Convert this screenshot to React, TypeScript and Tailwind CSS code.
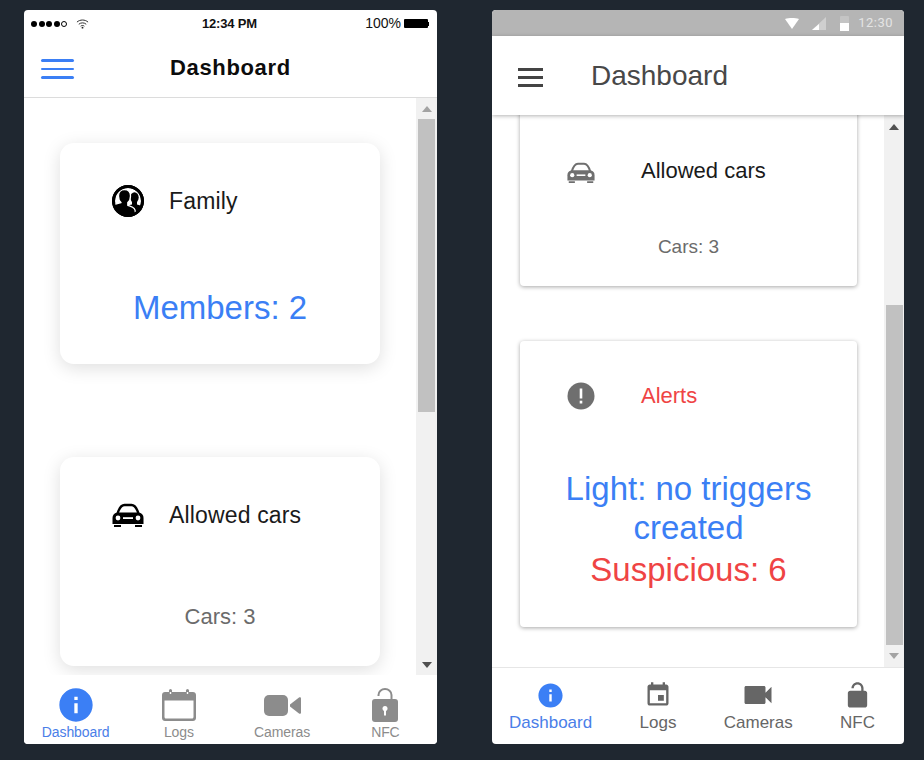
const FONT = "font-['Liberation_Sans',Arial,sans-serif]";

function ScrollArrow({ up, dark }: { up?: boolean; dark?: boolean }) {
  return (
    <svg viewBox="0 0 10 6" className="w-[10px] h-[6px]" aria-hidden="true">
      <path d={up ? "M5 0l5 6H0z" : "M0 0h10L5 6z"} fill={dark ? "#505050" : "#a3a3a3"} />
    </svg>
  );
}

function FamilyIcon() {
  return (
    <svg viewBox="0 0 32 32" className="w-8 h-8" aria-hidden="true">
      <defs>
        <clipPath id="family-clip">
          <circle cx="16" cy="16" r="14" />
        </clipPath>
      </defs>
      <circle cx="16" cy="16" r="14.500" fill="#fff" stroke="#000" strokeWidth="3" />
      <g clipPath="url(#family-clip)">
        <ellipse cx="22.500" cy="12.500" rx="4.200" ry="5.200" fill="#000" />
        <path d="M20 16h5v3.500c2.500.8 5 1.500 7 3v9.500H14V21c2-.6 4.500-1 6-1.500z" fill="#000" />
        <path d="M12.500 4.500c3.800 0 6 2.700 6 6.500 0 2.800-1 5.200-2.700 6.500v2.800c2.500 1 5.300 1.700 6.500 3.400.7 1 1 2.300 1 3.300L24 32H0V20c2.500-.6 6.500-1.500 9-2.400V17.500C7.400 16.200 6.500 13.800 6.500 11c0-3.800 2.200-6.500 6-6.500z" fill="#000" stroke="#fff" strokeWidth="1.300" />
      </g>
      <circle cx="16" cy="16" r="14.500" fill="none" stroke="#000" strokeWidth="3" />
    </svg>
  );
}

function CarIcon({ color, className }: { color: string; className: string }) {
  return (
    <svg viewBox="0 0 32 24" className={className} aria-hidden="true">
      <path d="M5.500 11C7 5.500 9 2 12.500 2h7c3.500 0 5.500 3.500 7 9" fill="none" stroke={color} strokeWidth="2.400" />
      <path d="M5 9.500h22c3 1 4.500 2.500 4.500 5.500v6H.5v-6c0-3 1.500-4.500 4.500-5.500z" fill={color} />
      <circle cx="6" cy="15" r="2.400" fill="#fff" />
      <circle cx="26" cy="15" r="2.400" fill="#fff" />
      <rect x="11" y="14.200" width="10" height="1.800" fill="#fff" />
      <rect x="2" y="22" width="7" height="2" fill={color} />
      <rect x="23" y="22" width="7" height="2" fill={color} />
    </svg>
  );
}

function IosCalendar() {
  return (
    <svg viewBox="0 0 34 32" className="w-[34px] h-8" aria-hidden="true">
      <path fillRule="evenodd" fill="#8c8c8c" d="M3 3h28c1.600 0 3 1.300 3 3v23c0 1.700-1.400 3-3 3H3c-1.600 0-3-1.300-3-3V6c0-1.700 1.400-3 3-3zm-.5 8.500V28c0 .9.600 1.500 1.500 1.500h26c.9 0 1.500-.6 1.500-1.500V11.500z" />
      <rect x="7" y="0" width="3" height="5" rx="1.500" fill="#8c8c8c" />
      <rect x="24" y="0" width="3" height="5" rx="1.500" fill="#8c8c8c" />
      <rect x="7.800" y="3" width="1.400" height="2" fill="#fff" />
      <rect x="24.800" y="3" width="1.400" height="2" fill="#fff" />
    </svg>
  );
}

function IosVideo() {
  return (
    <svg viewBox="0 0 37 21" className="w-[37px] h-[21px]" aria-hidden="true">
      <rect x="0" y="0" width="24" height="21" rx="5" fill="#8c8c8c" />
      <path d="M26 9.500 35 2.500c1-.7 2-.2 2 1v14c0 1.200-1 1.700-2 1l-9-7z" fill="#8c8c8c" />
    </svg>
  );
}

function IosLock() {
  return (
    <svg viewBox="0 0 26 34" className="w-[26px] h-[34px]" aria-hidden="true">
      <path d="M6.500 8V7C6.500 3.500 9.500 1 13 1s6.500 2.500 6.500 6v6" fill="none" stroke="#8c8c8c" strokeWidth="2" />
      <rect x="0" y="11" width="26" height="23" rx="3" fill="#8c8c8c" />
      <circle cx="13" cy="20.500" r="2.500" fill="#fff" />
      <rect x="12" y="20.500" width="2" height="7" fill="#fff" />
    </svg>
  );
}

function MdIcon({ d, size, color }: { d: string; size: string; color: string }) {
  return (
    <svg viewBox="0 0 24 24" className={size} aria-hidden="true">
      <path d={d} fill={color} />
    </svg>
  );
}

const INFO = "M12 2C6.480 2 2 6.480 2 12s4.480 10 10 10 10-4.480 10-10S17.520 2 12 2zm1 15h-2v-6h2v6zm0-8h-2V7h2v2z";
const EVENT = "M17 12h-5v5h5v-5zM16 1v2H8V1H6v2H5c-1.110 0-1.990.9-1.990 2L3 19c0 1.100.89 2 2 2h14c1.100 0 2-.9 2-2V5c0-1.100-.9-2-2-2h-1V1h-2zm3 18H5V8h14v11z";
const VIDEO = "M17 10.500V7c0-.55-.45-1-1-1H4c-.55 0-1 .45-1 1v10c0 .55.45 1 1 1h12c.55 0 1-.45 1-1v-3.500l4 4v-11l-4 4z";
const LOCK = "M12 17c1.100 0 2-.9 2-2s-.9-2-2-2-2 .9-2 2 .9 2 2 2zm6-9h-1V6c0-2.760-2.240-5-5-5S7 3.240 7 6h1.900c0-1.710 1.390-3.100 3.100-3.100 1.710 0 3.100 1.390 3.100 3.100v2H6c-1.100 0-2 .9-2 2v10c0 1.100.9 2 2 2h12c1.100 0 2-.9 2-2V10c0-1.100-.9-2-2-2z";

function IosStatusBar() {
  return (
    <div className="h-[30px] flex items-center pl-[7px] pr-[8px] pb-[3px] text-[14px] text-[#111]">
      <div className="w-[171px] flex items-center gap-[9px]">
        <div className="flex items-center gap-[1.5px]">
          <span className="w-[6px] h-[6px] rounded-full bg-black" />
          <span className="w-[6px] h-[6px] rounded-full bg-black" />
          <span className="w-[6px] h-[6px] rounded-full bg-black" />
          <span className="w-[6px] h-[6px] rounded-full bg-black" />
          <span className="w-[6px] h-[6px] rounded-full border border-black" />
        </div>
        <svg viewBox="0 0 14 11" className="w-[13px] h-[11px]" aria-hidden="true">
          <path d="M1 4c3.400-3 8.600-3 12 0M3 6.300c2.300-2 5.700-2 8 0M5 8.400c1.200-1 2.800-1 4 0" fill="none" stroke="#222" strokeWidth="1" />
          <circle cx="7" cy="10" r="1" fill="#222" />
        </svg>
      </div>
      <span className="text-[13px] font-bold tracking-[-0.2px]">12:34 PM</span>
      <div className="flex-1 flex items-center justify-end gap-[3px]">
        <span className="text-[14px]">100%</span>
        <span className="w-[24px] h-[9px] bg-black rounded-[1px]" />
        <span className="w-[1px] h-[4px] bg-black -ml-[3px]" />
      </div>
    </div>
  );
}

function IosPhone() {
  return (
    <div className="w-[413px] h-[734px] bg-white rounded-[4px] overflow-hidden flex flex-col shrink-0">
      <IosStatusBar />
      <div className="h-[57px] flex items-center pl-[17px] border-b border-[#dcdcdc] box-content">
        <div className="w-[33px] flex flex-col gap-[6px]">
          <span className="h-[3px] rounded-full bg-[#3b7ff5]" />
          <span className="h-[2px] rounded-full bg-[#3b7ff5]" />
          <span className="h-[3px] rounded-full bg-[#3b7ff5]" />
        </div>
        <h1 className="ml-[96px] -mt-[2px] text-[22px] font-bold tracking-[0.65px] text-[#0c0c0c]">Dashboard</h1>
      </div>
      <div className="flex-1 min-h-0 flex">
        <div className="w-[392px] overflow-hidden pl-[36px] pt-[45px]">
          <div className="w-[320px] h-[221px] bg-white rounded-[14px] shadow-[0_4px_18px_rgba(0,0,0,0.13)] pt-[42px]">
            <div className="flex items-center pl-[52px] gap-[25px] h-8">
              <FamilyIcon />
              <span className="text-[23px] tracking-[0.15px] text-[#1a1a1a] leading-8">Family</span>
            </div>
            <div className="mt-[71px] text-center text-[33px] leading-10 text-[#3b7ff5]">Members: 2</div>
          </div>
          <div className="mt-[93px] w-[320px] h-[209px] bg-white rounded-[14px] shadow-[0_4px_18px_rgba(0,0,0,0.13)] pt-[42px]">
            <div className="flex items-center pl-[52px] gap-[25px] h-8">
              <CarIcon color="#000" className="w-8 h-6" />
              <span className="text-[23px] tracking-[0.15px] text-[#1a1a1a] leading-8">Allowed cars</span>
            </div>
            <div className="mt-[72px] text-center text-[22px] leading-7 text-[#6b6b6b]">Cars: 3</div>
          </div>
        </div>
        <div className="w-[21px] bg-[#f1f1f1] flex flex-col items-center">
          <div className="h-[21px] flex items-center justify-center"><ScrollArrow up /></div>
          <div className="w-[17px] h-[293px] bg-[#c1c1c1]" />
          <div className="mt-auto h-[21px] flex items-center justify-center"><ScrollArrow dark /></div>
        </div>
      </div>
      <div className="h-[69px] grid grid-cols-4 pt-[13px] text-[14px] tracking-[-0.1px] leading-4 text-[#8c8c8c] bg-white">
        <div className="flex flex-col items-center gap-[2px] text-[#4a7ee8]">
          <div className="h-[34px] flex items-center"><MdIcon d={INFO} size="w-10 h-10" color="#3b7ff5" /></div>
          <span>Dashboard</span>
        </div>
        <div className="flex flex-col items-center gap-[2px]">
          <div className="h-[34px] flex items-center"><IosCalendar /></div>
          <span>Logs</span>
        </div>
        <div className="flex flex-col items-center gap-[2px]">
          <div className="h-[34px] flex items-center"><IosVideo /></div>
          <span>Cameras</span>
        </div>
        <div className="flex flex-col items-center gap-[2px]">
          <div className="h-[34px] flex items-center"><IosLock /></div>
          <span>NFC</span>
        </div>
      </div>
    </div>
  );
}

function AndroidPhone() {
  return (
    <div className="w-[412px] h-[734px] bg-white rounded-[4px] overflow-hidden flex flex-col shrink-0">
      <div className="h-[26px] bg-[#b5b5b5] flex items-center justify-end pr-[11px]">
        <svg viewBox="0 0 14 11" className="w-[14px] h-[11px]" aria-hidden="true">
          <path d="M0 1c4-1.300 10-1.300 14 0L7 11z" fill="#fff" />
        </svg>
        <svg viewBox="0 0 14 13" className="w-[14px] h-[13px] ml-[13px]" aria-hidden="true">
          <path d="M14 0v13H0z" fill="#cfcfcf" />
          <path d="M7 7v6H0z" fill="#fff" />
        </svg>
        <svg viewBox="0 0 9 15" className="w-[9px] h-[15px] ml-[14px]" aria-hidden="true">
          <rect width="9" height="15" rx="1" fill="#c4c4c4" />
          <rect y="7" width="9" height="8" fill="#fff" />
        </svg>
        <span className="ml-[9px] font-['Roboto',sans-serif] text-[13px] tracking-[0.5px] text-[#e4e4e4]">12:30</span>
      </div>
      <div className="relative z-10 h-[79px] bg-white flex items-center pl-[26px] shadow-[0_1px_4px_rgba(0,0,0,0.3)]">
        <div className="w-[25px] mt-[3px] flex flex-col gap-[5px]">
          <span className="h-[3px] bg-[#444]" />
          <span className="h-[3px] bg-[#444]" />
          <span className="h-[3px] bg-[#444]" />
        </div>
        <h1 className="ml-[48px] text-[28px] text-[#484848]">Dashboard</h1>
      </div>
      <div className="flex-1 min-h-0 flex">
        <div className="w-[392px] overflow-hidden pl-[28px]">
          <div className="-mt-2 w-[337px] h-[179px] bg-white rounded-[4px] shadow-[0_1px_4px_rgba(0,0,0,0.35)] pt-[48px]">
            <div className="flex items-center pl-[47px] gap-[46px] h-8">
              <CarIcon color="#6f6f6f" className="w-[28px] h-[21px] mt-[3px]" />
              <span className="text-[22px] leading-8 text-[#1a1a1a]">Allowed cars</span>
            </div>
            <div className="mt-[48px] text-center text-[19px] leading-6 text-[#6b6b6b]">Cars: 3</div>
          </div>
          <div className="mt-[55px] w-[337px] h-[286px] bg-white rounded-[4px] shadow-[0_1px_4px_rgba(0,0,0,0.35)] pt-[39px]">
            <div className="flex items-center pl-[47px] gap-[46px] h-8">
              <svg viewBox="0 0 28 28" className="w-[28px] h-[28px]" aria-hidden="true">
                <circle cx="14" cy="14" r="13.500" fill="#6f6f6f" />
                <rect x="12.700" y="6.500" width="2.600" height="10" fill="#fff" />
                <rect x="12.700" y="18.700" width="2.600" height="2.800" fill="#fff" />
              </svg>
              <span className="text-[22px] leading-8 text-[#ef4444]">Alerts</span>
            </div>
            <div className="mt-[57px] px-[20px] text-center text-[33px] leading-[39px] text-[#3b7ff5]">Light: no triggers created</div>
            <div className="mt-[3px] text-center text-[33px] leading-[39px] text-[#ef4444]">Suspicious: 6</div>
          </div>
        </div>
        <div className="w-[20px] bg-[#f1f1f1] flex flex-col items-center">
          <div className="h-[21px] pt-[2px] flex items-center justify-center"><ScrollArrow up dark /></div>
          <div className="mt-[169px] w-[17px] h-[340px] bg-[#c1c1c1]" />
          <div className="mt-auto h-[22px] flex items-center justify-center"><ScrollArrow /></div>
        </div>
      </div>
      <div className="h-[77px] border-t border-[#e6e6e6] flex justify-between pl-[17px] pr-[29px] pt-[12px] text-[17px] leading-6 text-[#666]">
        <div className="flex flex-col items-center gap-[1px] text-[#4a7ee8]">
          <div className="h-[30px] flex items-center"><MdIcon d={INFO} size="w-[29px] h-[29px]" color="#3b7ff5" /></div>
          <span>Dashboard</span>
        </div>
        <div className="flex flex-col items-center gap-[1px]">
          <div className="h-[30px] flex items-center"><MdIcon d={EVENT} size="w-[28px] h-[28px]" color="#666" /></div>
          <span>Logs</span>
        </div>
        <div className="flex flex-col items-center gap-[1px]">
          <div className="h-[30px] flex items-center"><MdIcon d={VIDEO} size="w-[36px] h-[36px]" color="#666" /></div>
          <span>Cameras</span>
        </div>
        <div className="flex flex-col items-center gap-[1px]">
          <div className="h-[30px] flex items-center"><MdIcon d={LOCK} size="w-[29px] h-[29px]" color="#666" /></div>
          <span>NFC</span>
        </div>
      </div>
    </div>
  );
}

export default function App() {
  return (
    <div className={`${FONT} w-[924px] h-[760px] bg-[#1f2730] flex gap-[55px] pl-[24px] pt-[10px] overflow-hidden`}>
      <IosPhone />
      <AndroidPhone />
    </div>
  );
}
